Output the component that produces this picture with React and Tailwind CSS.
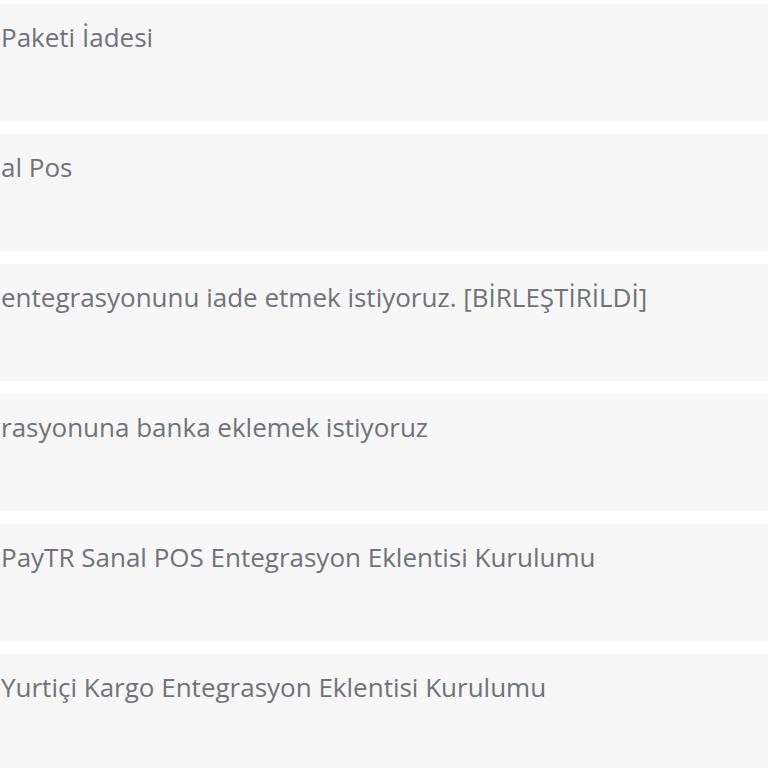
import React from 'react';

const items = [
  'Paketi İadesi',
  'al Pos',
  'entegrasyonunu iade etmek istiyoruz. [BİRLEŞTİRİLDİ]',
  'rasyonuna banka eklemek istiyoruz',
  'PayTR Sanal POS Entegrasyon Eklentisi Kurulumu',
  'Yurtiçi Kargo Entegrasyon Eklentisi Kurulumu',
];

export default function App() {
  return (
    <div
      className="w-[768px] h-[768px] overflow-hidden bg-white pt-[4px]"
      style={{ fontFamily: '"Open Sans", "Noto Sans", sans-serif' }}
    >
      <div className="flex flex-col gap-[13px]">
        {items.map((t, i) => (
          <div key={i} className="h-[117px] bg-[#f7f7f7] pl-[1px] pt-[16px]">
            <p className="text-[26px] leading-[34px] text-[#6e7379] whitespace-nowrap">{t}</p>
          </div>
        ))}
      </div>
    </div>
  );
}
